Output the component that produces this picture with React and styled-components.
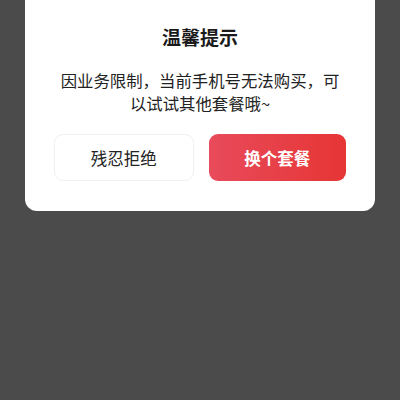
import React from "react";
import styled, { createGlobalStyle } from "styled-components";

const Global = createGlobalStyle`
  html, body { margin: 0; padding: 0; background: #4b4b4b; }
  body {
    font-family: "Noto Sans CJK SC", "Noto Sans", sans-serif;
    -webkit-font-smoothing: antialiased;
  }
`;

const Overlay = styled.div`
  width: 400px;
  height: 400px;
  background: #4b4b4b;
  display: flex;
  flex-direction: column;
  align-items: center;
  overflow: hidden;
`;

const Card = styled.div`
  width: 350px;
  margin-top: -20px;
  background: #ffffff;
  border-radius: 12px;
  padding: 44px 29px 30px;
  box-sizing: border-box;
  display: flex;
  flex-direction: column;
  align-items: center;
`;

const Title = styled.h2`
  margin: 0;
  font-size: 19px;
  font-weight: 700;
  line-height: 26px;
  color: #1a1a1a;
`;

const Message = styled.p`
  margin: 19px 0 0;
  font-size: 16.4px;
  line-height: 23px;
  color: #222;
  text-align: center;
`;

const Actions = styled.div`
  margin-top: 19px;
  width: 100%;
  display: flex;
  gap: 15px;
`;

const Button = styled.button`
  flex: 1;
  height: 47px;
  border-radius: 9px;
  font-family: inherit;
  font-size: 16.5px;
  cursor: pointer;
  border: ${(p) => (p.$primary ? "none" : "1px solid #f0f0f0")};
  background: ${(p) =>
    p.$primary ? "linear-gradient(90deg, #e84b5b 0%, #e63535 100%)" : "#ffffff"};
  color: ${(p) => (p.$primary ? "#ffffff" : "#222")};
  font-weight: ${(p) => (p.$primary ? 700 : 400)};
`;

export default function App() {
  return (
    <>
      <Global />
      <Overlay>
        <Card>
          <Title>温馨提示</Title>
          <Message>
            因业务限制，当前手机号无法购买，可
            <br />
            以试试其他套餐哦~
          </Message>
          <Actions>
            <Button>残忍拒绝</Button>
            <Button $primary>换个套餐</Button>
          </Actions>
        </Card>
      </Overlay>
    </>
  );
}
